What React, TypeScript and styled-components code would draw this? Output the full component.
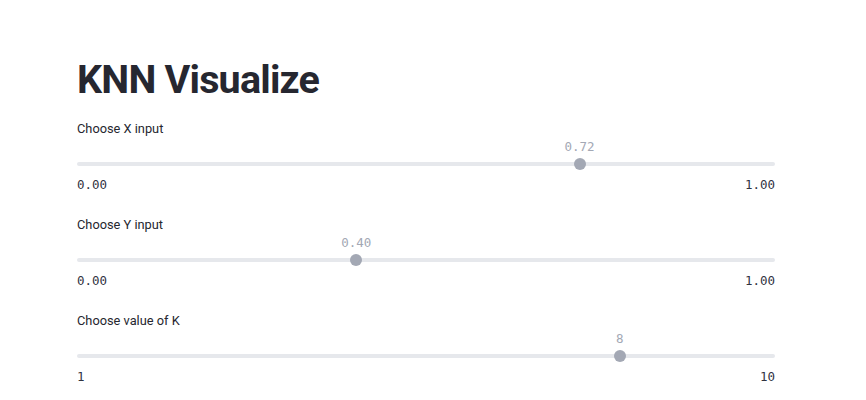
import React from "react";
import styled, { createGlobalStyle } from "styled-components";

const Global = createGlobalStyle`
  html, body { margin: 0; padding: 0; background: #ffffff; }
  body { font-family: Roboto, "Noto Sans", sans-serif; color: #262730; }
`;

const Page = styled.main`
  width: 698px;
  padding: 55px 0 0 77px;
`;

const Title = styled.h1`
  margin: 0 0 14px 0;
  font-family: Roboto, "Noto Sans", sans-serif;
  font-weight: 700;
  font-size: 39.5px;
  line-height: 50px;
  color: #262730;
  letter-spacing: -0.8px;
`;

const Block = styled.section`
  display: flex;
  flex-direction: column;
  height: 96px;
`;

const Label = styled.label`
  font-family: Roboto, "Noto Sans", sans-serif;
  font-size: 12.8px;
  line-height: 20px;
  color: #262730;
`;

const TrackArea = styled.div`
  padding: 23px 0 11px 0;
`;

const Track = styled.div`
  position: relative;
  height: 4px;
  border-radius: 2px;
  background: #e6e8ec;
`;

const Thumb = styled.div`
  position: absolute;
  top: -4px;
  width: 12px;
  height: 12px;
  margin-left: -6px;
  border-radius: 50%;
  background: #a3a8b4;
`;

const ValueLabel = styled.div`
  position: absolute;
  top: -23px;
  transform: translateX(-50%);
  font-family: "DejaVu Sans Mono", "Liberation Mono", monospace;
  font-size: 12.5px;
  line-height: 16px;
  color: #a3a8b4;
  white-space: nowrap;
`;

const TickRow = styled.div`
  display: flex;
  justify-content: space-between;
  font-family: "DejaVu Sans Mono", "Liberation Mono", monospace;
  font-size: 12.5px;
  line-height: 16px;
  color: #31333f;
`;

type SliderProps = {
  label: string;
  min: number;
  max: number;
  value: number;
  digits: number;
};

const Slider = ({ label, min, max, value, digits }: SliderProps) => {
  const pct = ((value - min) / (max - min)) * 100;
  return (
    <Block>
      <Label>{label}</Label>
      <TrackArea>
        <Track>
          <ValueLabel style={{ left: `${pct}%` }}>{value.toFixed(digits)}</ValueLabel>
          <Thumb style={{ left: `${pct}%` }} />
        </Track>
      </TrackArea>
      <TickRow>
        <span>{min.toFixed(digits)}</span>
        <span>{max.toFixed(digits)}</span>
      </TickRow>
    </Block>
  );
};

export default function App() {
  return (
    <>
      <Global />
      <Page>
        <Title>KNN Visualize</Title>
        <Slider label="Choose X input" min={0} max={1} value={0.72} digits={2} />
        <Slider label="Choose Y input" min={0} max={1} value={0.4} digits={2} />
        <Slider label="Choose value of K" min={1} max={10} value={8} digits={0} />
      </Page>
    </>
  );
}
